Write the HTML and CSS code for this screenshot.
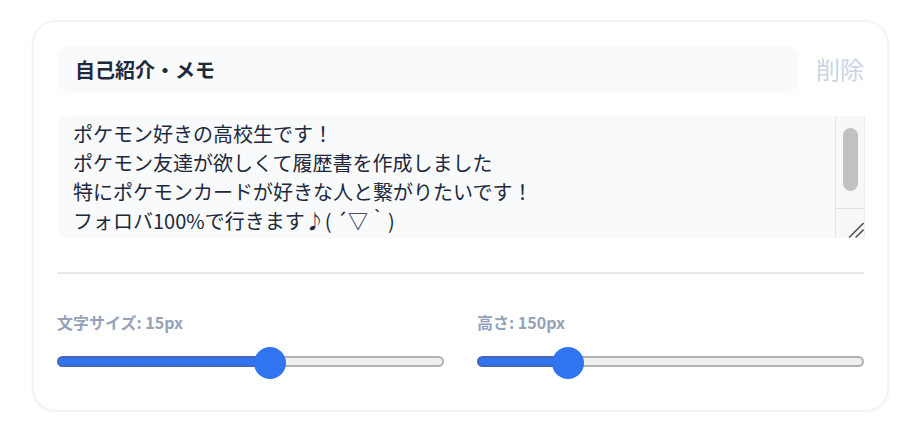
FILE: index.html
```html
<!DOCTYPE html>
<html lang="ja">
<head>
<meta charset="utf-8">
<title>自己紹介・メモ</title>
<link rel="stylesheet" href="styles.css">
</head>
<body>
<div class="page">
  <section class="card">
    <div class="card-head">
      <input class="title-input" type="text" value="自己紹介・メモ">
      <button class="delete-btn" type="button">削除</button>
    </div>
    <div class="memo-box">
      <textarea class="memo" spellcheck="false">ポケモン好きの高校生です！
ポケモン友達が欲しくて履歴書を作成しました
特にポケモンカードが好きな人と繋がりたいです！
フォロバ100%で行きます♪( ´▽｀)</textarea>
      <div class="scrollbar" aria-hidden="true">
        <div class="scroll-track"><div class="scroll-thumb"></div></div>
        <div class="scroll-corner">
          <svg class="grip" width="30" height="30" viewBox="0 0 30 30">
            <path d="M14 29.5 L29.5 14" stroke="#555" stroke-width="1.6" fill="none"/>
            <path d="M21 29.5 L29.5 21" stroke="#555" stroke-width="1.6" fill="none"/>
          </svg>
        </div>
      </div>
    </div>
    <hr class="divider">
    <div class="controls">
      <label class="control">
        <span class="control-label">文字サイズ: 15px</span>
        <input class="range" type="range" min="10" max="19" value="15" style="--f:0.556">
      </label>
      <label class="control">
        <span class="control-label">高さ: 150px</span>
        <input class="range" type="range" min="100" max="340" value="150" style="--f:0.208">
      </label>
    </div>
  </section>
</div>
</body>
</html>
```

FILE: styles.css
```css
html, body {
  margin: 0;
  padding: 0;
  background: #ffffff;
}

body {
  font-family: "Noto Sans CJK JP", "Noto Sans", sans-serif;
  color: #1e293b;
}

.page {
  padding: 20px 0 0 32px;
}

.card {
  box-sizing: border-box;
  width: 857px;
  height: 392px;
  background: #ffffff;
  border: 2px solid #f1f4f8;
  border-radius: 24px;
  padding: 24px 23px 33px 23px;
  box-shadow: 0 1px 3px rgba(15, 23, 42, 0.04);
}

.card-head {
  display: flex;
  align-items: center;
  gap: 17px;
}

.title-input {
  flex: 1;
  box-sizing: border-box;
  height: 46px;
  border: none;
  outline: none;
  border-radius: 12px;
  background: #f8fafc;
  padding: 0 18px;
  font-family: "Noto Sans CJK JP", sans-serif;
  font-size: 20px;
  font-weight: 700;
  color: #1e293b;
}

.delete-btn {
  border: none;
  background: none;
  padding: 0;
  font-family: "Noto Sans CJK JP", sans-serif;
  font-size: 24px;
  line-height: 46px;
  color: #cbd5e1;
  cursor: pointer;
}

.memo-box {
  display: flex;
  height: 122px;
  margin-top: 24px;
  margin-right: -1px;
  border-radius: 10px 0 0 10px;
  background: #f8fafc;
  overflow: hidden;
}

.memo {
  flex: 1;
  display: block;
  box-sizing: border-box;
  height: 100%;
  margin: 0;
  border: none;
  outline: none;
  background: transparent;
  padding: 3px 16px 8px 16px;
  font-family: "Noto Sans CJK JP", sans-serif;
  font-size: 20px;
  line-height: 29px;
  color: #1e293b;
  resize: none;
  overflow: hidden;
}

.scrollbar {
  width: 30px;
  display: flex;
  flex-direction: column;
  background: #f8f8f8;
  border-left: 1px solid #e4e4e4;
  border-right: 1px solid #ececec;
  box-sizing: border-box;
}

.scroll-track {
  flex: 1;
  padding: 12px 6px 0 7px;
}

.scroll-thumb {
  height: 63px;
  border-radius: 8px;
  background: #c1c1c1;
}

.scroll-corner {
  height: 30px;
  border-top: 1px solid #e0e0e0;
  box-sizing: border-box;
  display: flex;
  justify-content: flex-end;
  align-items: flex-end;
}

.grip {
  display: block;
  width: 28px;
  height: 28px;
}

.divider {
  border: none;
  height: 2px;
  background: #e5e7eb;
  margin: 34px 0 38px 0;
}

.controls {
  display: grid;
  grid-template-columns: 1fr 1fr;
  column-gap: 33px;
}

.control {
  display: flex;
  flex-direction: column;
  gap: 13px;
}

.control-label {
  font-size: 16px;
  line-height: 20px;
  font-weight: 700;
  color: #94a3b8;
}

.range {
  -webkit-appearance: none;
  appearance: none;
  display: block;
  width: 100%;
  height: 32px;
  margin: 0;
  background: transparent;
}

.range:focus {
  outline: none;
}

.range::-webkit-slider-runnable-track {
  height: 11px;
  border: 2px solid transparent;
  border-radius: 9px;
  background:
    linear-gradient(to right, #3174f0 0, #3174f0 calc(14px + var(--f) * (100% - 28px)), #efefef calc(14px + var(--f) * (100% - 28px))) padding-box,
    linear-gradient(to right, #4567b5 0, #4567b5 calc(16px + var(--f) * (100% - 32px)), #b2b2b2 calc(16px + var(--f) * (100% - 32px))) border-box;
}

.range::-webkit-slider-thumb {
  -webkit-appearance: none;
  appearance: none;
  width: 32px;
  height: 32px;
  margin-top: -10.5px;
  border: none;
  border-radius: 50%;
  background: #3174f0;
}
```
